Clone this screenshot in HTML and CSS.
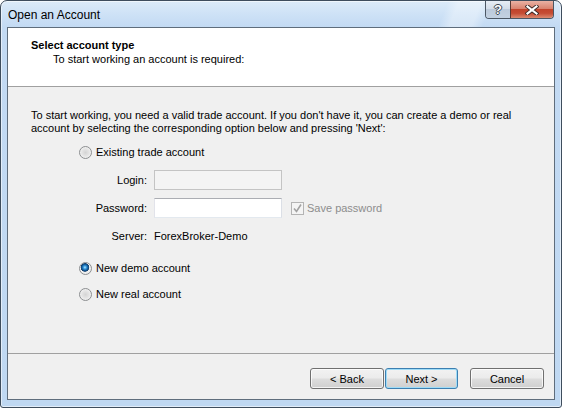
FILE: index.html
```html
<!DOCTYPE html>
<html>
<head>
<meta charset="utf-8">
<title>Open an Account</title>
<link rel="stylesheet" href="styles.css">
</head>
<body>
<div class="window">
  <div class="titlebar">
    <span class="title">Open an Account</span>
    <div class="caption-buttons">
      <span class="cap-btn help">?</span>
      <span class="cap-btn close">
        <svg width="14" height="10" viewBox="0 0 14 10">
          <path d="M2.5 1.5 L11.5 8.5 M11.5 1.5 L2.5 8.5" stroke="#3a2a28" stroke-width="4" stroke-linecap="square"/>
          <path d="M2.5 1.5 L11.5 8.5 M11.5 1.5 L2.5 8.5" stroke="#fff" stroke-width="2.2" stroke-linecap="square"/>
        </svg>
      </span>
    </div>
  </div>

  <div class="client">
    <div class="header">
      <div class="header-title">Select account type</div>
      <div class="header-sub">To start working an account is required:</div>
    </div>

    <div class="body">
      <p class="intro">To start working, you need a valid trade account. If you don't have it, you can create a demo or real<br>account by selecting the corresponding option below and pressing 'Next':</p>

      <div class="options">
        <div class="option"><span class="radio"></span>Existing trade account</div>

        <div class="fields">
          <span class="field-label">Login:</span>
          <span class="input disabled"></span>
          <span></span>

          <span class="field-label">Password:</span>
          <span class="input"></span>
          <span class="check">
            <span class="checkbox">
              <svg width="11" height="11" viewBox="0 0 11 11">
                <path d="M2 5.5 L4.5 8.5 L9 1.5" fill="none" stroke="#a2a2a2" stroke-width="1.6"/>
              </svg>
            </span>Save password
          </span>

          <span class="field-label server">Server:</span>
          <span class="value server">ForexBroker-Demo</span>
          <span></span>
        </div>

        <div class="option demo"><span class="radio checked"></span>New demo account</div>
        <div class="option real"><span class="radio"></span>New real account</div>
      </div>
    </div>

    <div class="footer">
      <button class="btn">&lt; Back</button>
      <button class="btn default">Next &gt;</button>
      <button class="btn cancel">Cancel</button>
    </div>
  </div>
</div>
</body>
</html>
```

FILE: styles.css
```css
body {
  margin: 0;
  background: #fff;
}

/* window frame */
.window {
  width: 562px;
  height: 408px;
  box-sizing: border-box;
  border: 1px solid #3e4d5d;
  border-radius: 7px 7px 3px 3px;
  padding: 0 6px 7px;
  display: flex;
  flex-direction: column;
  background: linear-gradient(180deg, #dcebf9 0, #cde1f6 14px, #c3daf3 26px, #bfd8f2 100%);
  box-shadow: inset 0 0 0 1px rgba(255, 255, 255, 0.55);
  font-family: "Liberation Sans", Arial, sans-serif;
  font-size: 11px;
  color: #000;
}

.titlebar {
  height: 26px;
  flex: none;
  display: flex;
  justify-content: space-between;
  align-items: flex-start;
  padding: 0 1px;
  background: linear-gradient(112deg, transparent 79%, rgba(255, 255, 255, 0.35) 81%, rgba(255, 255, 255, 0.35) 85%, transparent 87%);
}

.title {
  margin-top: 7px;
  font-size: 12px;
  color: #000;
}

.caption-buttons {
  display: flex;
  border: 1px solid #4c5764;
  border-top: none;
  border-radius: 0 0 4px 4px;
  overflow: hidden;
}

.cap-btn {
  height: 17px;
  display: flex;
  align-items: center;
  justify-content: center;
}

.help {
  width: 24px;
  background: linear-gradient(180deg, #e6edf5 0, #d3dde9 45%, #bccadb 50%, #c3d1e1 100%);
  font-weight: bold;
  font-size: 13px;
  color: #fff;
  text-shadow: 1px 0 0 #3c4652, -1px 0 0 #3c4652, 0 1px 0 #3c4652, 0 -1px 0 #3c4652;
}

.close {
  width: 42px;
  border-left: 1px solid #5a3a34;
  background: linear-gradient(180deg, #eab2a4 0, #d9836f 45%, #c2442c 50%, #c54c34 72%, #dc8a70 100%);
}

/* client area */
.client {
  flex: 1;
  display: flex;
  flex-direction: column;
  border: 1px solid #5f6d7c;
  background: #f0f0f0;
}

.header {
  height: 59px;
  box-sizing: border-box;
  flex: none;
  background: #fff;
  border-bottom: 1px solid #a0a0a0;
  padding: 11px 0 0 23px;
  line-height: 13px;
}

.header-title {
  font-weight: bold;
}

.header-sub {
  margin-top: 1px;
  padding-left: 22px;
}

.body {
  flex: 1;
  padding: 22px 0 0 23px;
}

.intro {
  margin: 0;
  line-height: 13px;
}

.options {
  margin-left: 48px;
}

.option {
  display: flex;
  align-items: center;
  height: 16px;
  margin-top: 9px;
}

.option.demo {
  margin-top: 16px;
}

.option.real {
  margin-top: 10px;
}

.radio {
  width: 13px;
  height: 13px;
  box-sizing: border-box;
  border-radius: 50%;
  border: 1px solid #8c8e90;
  background: radial-gradient(circle at 50% 50%, #d4d4d4 0, #e6e6e6 50%, #f6f6f6 80%, #fafafa 100%);
  margin-right: 4px;
  flex: none;
}

.radio.checked {
  background: radial-gradient(circle at 45% 40%, #b8ecff 0, #3a9ce0 1.5px, #0f5a9c 3px, #17406a 4px, #f2f2f2 4.6px, #e2e2e2 100%);
}

.fields {
  display: grid;
  grid-template-columns: 68px 128px auto;
  column-gap: 7px;
  row-gap: 8px;
  align-items: center;
  margin-top: 10px;
}

.field-label {
  text-align: right;
}

.server {
  margin-top: 2px;
  line-height: 16px;
}

.input {
  height: 20px;
  box-sizing: border-box;
  border: 1px solid #abadb3;
  border-color: #abadb3 #dbdfe6 #e3e9ef #e2e3ea;
  background: #fff;
}

.input.disabled {
  border-color: #c4c4c4;
  background: #f4f4f4;
}

.check {
  display: flex;
  align-items: center;
  margin-left: 2px;
  color: #8d8d8d;
}

.checkbox {
  width: 13px;
  height: 13px;
  box-sizing: border-box;
  border: 1px solid #b4b4b4;
  background: #f4f4f4;
  margin-right: 3px;
  display: flex;
  align-items: center;
  justify-content: center;
}

/* footer buttons */
.footer {
  height: 46px;
  box-sizing: border-box;
  flex: none;
  border-top: 1px solid #a0a0a0;
  display: flex;
  justify-content: flex-end;
  align-items: flex-start;
  padding: 14px 10px 0 0;
}

.btn {
  width: 74px;
  height: 21px;
  box-sizing: border-box;
  margin: 0;
  padding: 0;
  border: 1px solid #707070;
  border-radius: 3px;
  background: linear-gradient(180deg, #f2f2f2 0, #ebebeb 48%, #dddddd 52%, #cfcfcf 100%);
  box-shadow: inset 0 0 0 1px rgba(255, 255, 255, 0.75);
  font-family: "Liberation Sans", Arial, sans-serif;
  font-size: 11px;
  color: #000;
}

.btn.default {
  width: 73px;
  margin-left: 1px;
  border-color: #3c7fb1;
  box-shadow: inset 0 0 0 1px #9fdcf7;
}

.btn.cancel {
  margin-left: 12px;
}
```
